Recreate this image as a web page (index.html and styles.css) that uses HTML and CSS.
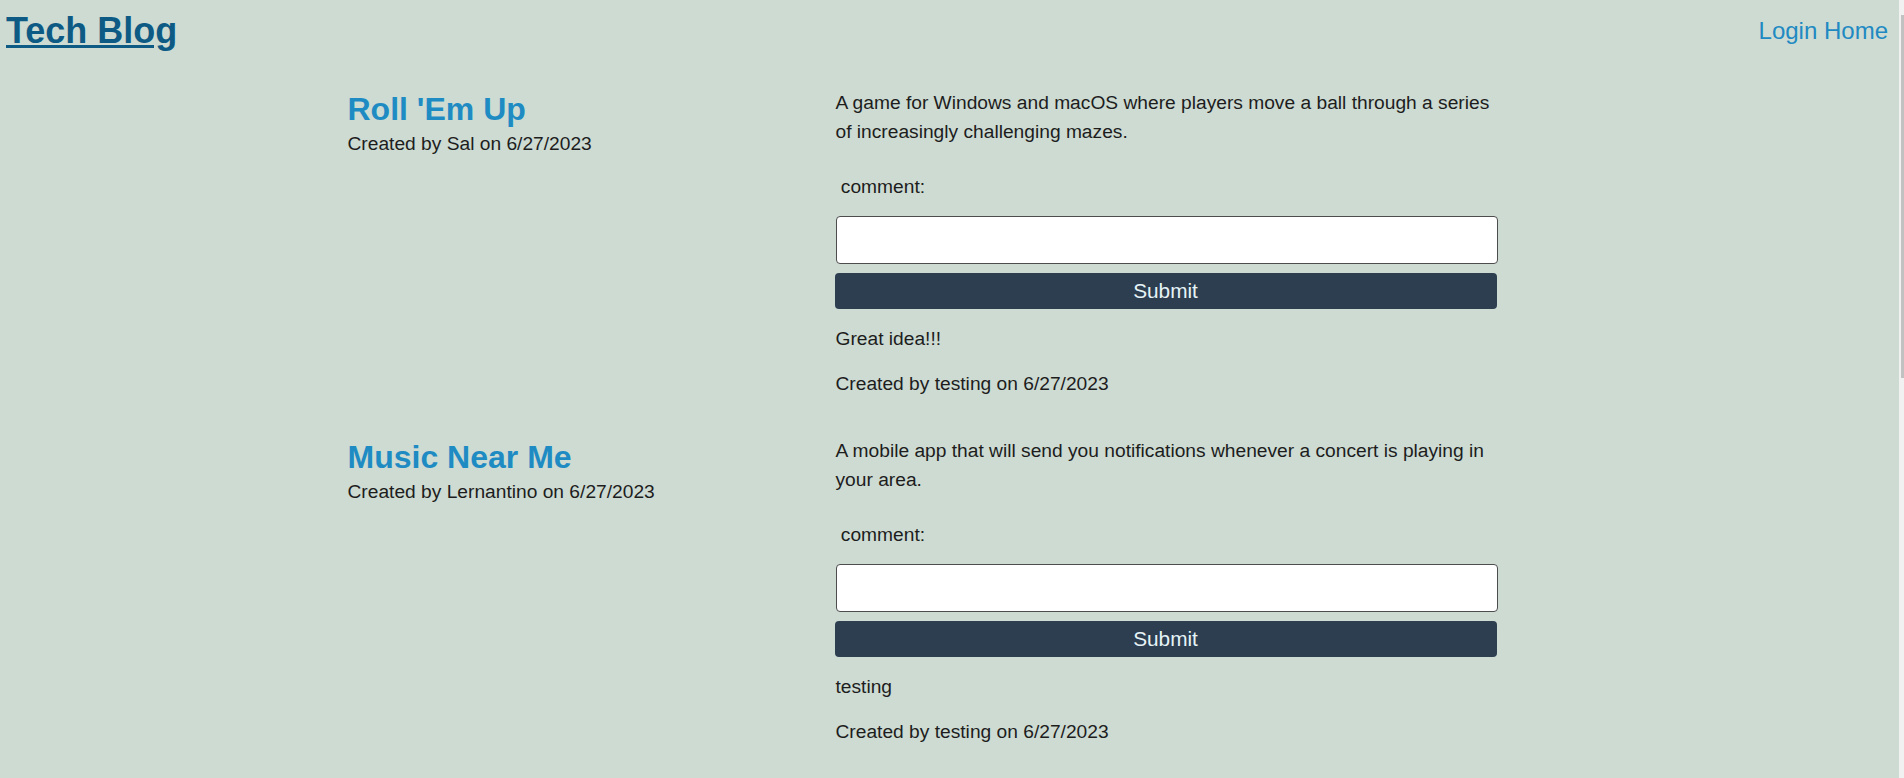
FILE: index.html
```html
<!DOCTYPE html>
<html lang="en">
<head>
<meta charset="utf-8">
<title>Tech Blog</title>
<link rel="stylesheet" href="styles.css">
</head>
<body>
<header class="site-header">
  <h1 class="brand"><a href="#">Tech Blog</a></h1>
  <nav class="nav"><a href="#">Login</a> <a href="#">Home</a></nav>
</header>
<main class="posts">
  <article class="post">
    <div class="post-meta">
      <h2 class="post-title">Roll 'Em Up</h2>
      <p class="byline">Created by Sal on 6/27/2023</p>
    </div>
    <div class="post-body">
      <p class="desc">A game for Windows and macOS where players move a ball through a series of increasingly challenging mazes.</p>
      <form class="comment-form">
        <label class="comment-label"> comment:</label>
        <input class="comment-input" type="text">
        <button class="submit-btn" type="button">Submit</button>
      </form>
      <div class="comments">
        <p class="comment-text">Great idea!!!</p>
        <p class="comment-by">Created by testing on 6/27/2023</p>
      </div>
    </div>
  </article>
  <article class="post">
    <div class="post-meta">
      <h2 class="post-title">Music Near Me</h2>
      <p class="byline">Created by Lernantino on 6/27/2023</p>
    </div>
    <div class="post-body">
      <p class="desc">A mobile app that will send you notifications whenever a concert is playing in your area.</p>
      <form class="comment-form">
        <label class="comment-label"> comment:</label>
        <input class="comment-input" type="text">
        <button class="submit-btn" type="button">Submit</button>
      </form>
      <div class="comments">
        <p class="comment-text">testing</p>
        <p class="comment-by">Created by testing on 6/27/2023</p>
      </div>
    </div>
  </article>
</main>
<div class="scrollbar" aria-hidden="true"><div class="scrollbar-thumb"></div></div>
</body>
</html>
```
FILE: styles.css
```css
html {
  scrollbar-width: none;
}
html::-webkit-scrollbar {
  display: none;
}

body {
  margin: 0;
  padding-right: 5px;
  background: #cddbd3;
  color: #1d1d1d;
  font-family: "Liberation Sans", Arial, sans-serif;
  font-size: 19.2px;
  line-height: 28.8px;
}

.scrollbar {
  position: fixed;
  top: 0;
  right: 0;
  width: 5px;
  height: 100vh;
  background: #f1f1f1;
}
.scrollbar-thumb {
  margin: 15px 0 0 2px;
  height: 363px;
  background: #c1c1c1;
}

.site-header {
  display: flex;
  justify-content: space-between;
  align-items: center;
  padding: 11px 11px 0 6px;
}

.brand {
  margin: 0;
  font-size: 36px;
  line-height: 40px;
  font-weight: bold;
}
.brand a {
  color: #0d5a84;
  text-decoration: underline;
}

.nav {
  font-size: 24px;
  line-height: 28px;
}
.nav a {
  color: #2189c2;
  text-decoration: none;
}

.posts {
  width: 1204px;
  margin: 0 auto;
  padding-top: 38px;
}

.post {
  display: grid;
  grid-template-columns: 488px 662px;
  align-items: start;
  margin-bottom: 38.2px;
}

.post-title {
  margin: 0.7px 0 0;
  font-size: 32px;
  line-height: 38.4px;
  font-weight: bold;
  color: #1f8bc3;
}

.byline {
  margin: 1.5px 0 0;
}

.desc {
  margin: 0 0 26.6px;
}

.comment-form {
  display: flex;
  flex-direction: column;
  align-items: stretch;
}

.comment-label {
  display: block;
  white-space: pre;
  margin-bottom: 13.6px;
}

.comment-input {
  box-sizing: border-box;
  width: 662px;
  height: 48px;
  margin: 0;
  border: 1px solid #4d4d4d;
  border-radius: 4px;
  background: #fff;
  font: inherit;
}

.submit-btn {
  box-sizing: border-box;
  width: 662px;
  height: 36px;
  margin: 9px 0 0 -1px;
  border: none;
  border-radius: 4px;
  background: #2c3e50;
  color: #e6f3f7;
  font-family: "Liberation Sans", Arial, sans-serif;
  font-size: 20.8px;
  line-height: 36px;
  padding: 0;
}

.comments {
  padding-top: 16.6px;
}

.comment-text {
  margin: 0 0 16.2px;
}

.comment-by {
  margin: 0;
}
```
